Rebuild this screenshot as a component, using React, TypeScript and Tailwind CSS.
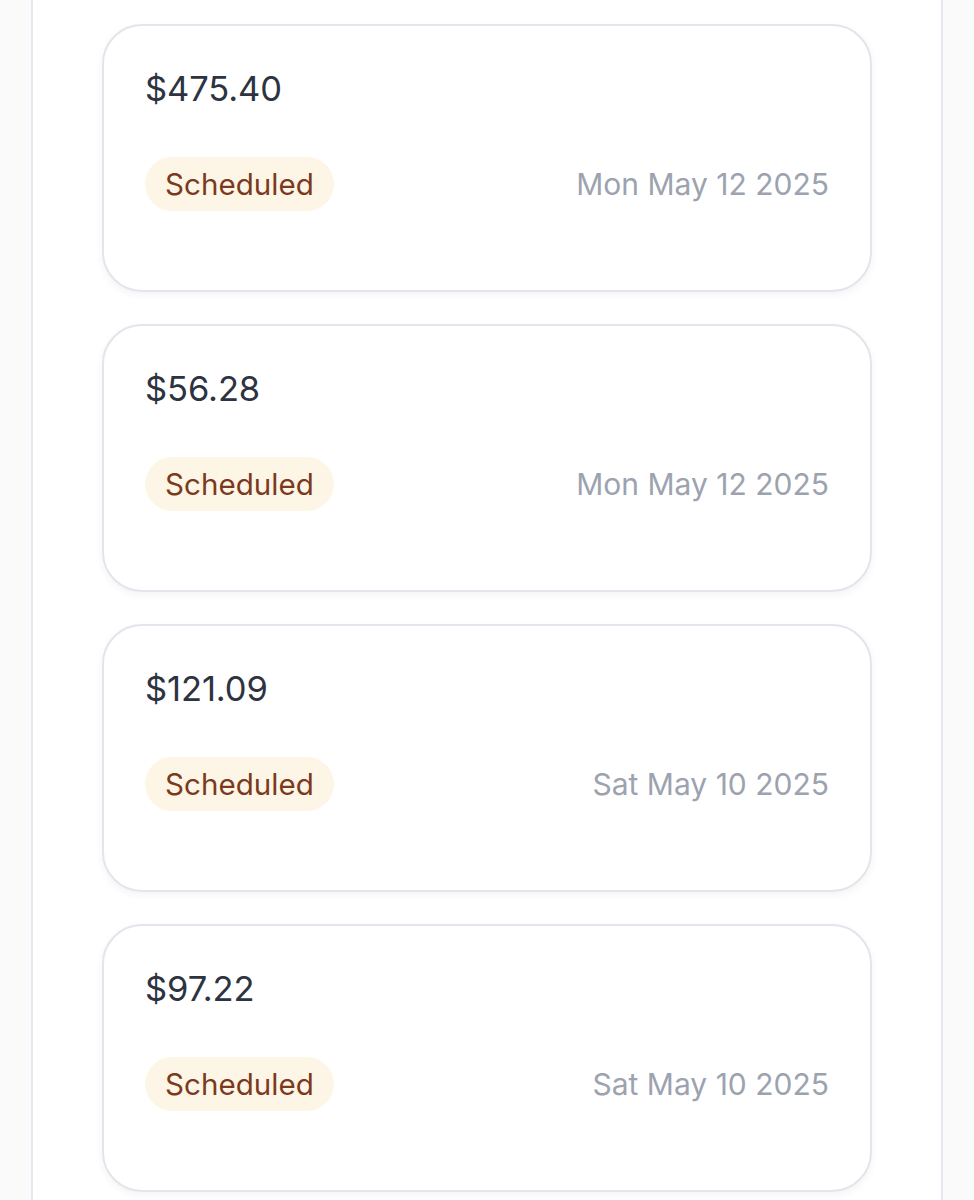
import React from "react";

const items = [
  { amount: "$475.40", date: "Mon May 12 2025" },
  { amount: "$56.28", date: "Mon May 12 2025" },
  { amount: "$121.09", date: "Sat May 10 2025" },
  { amount: "$97.22", date: "Sat May 10 2025" },
];

export default function App() {
  return (
    <div
      className="min-h-[1200px] bg-[#fafafa] flex justify-center"
      style={{ fontFamily: "Inter, 'Noto Sans', sans-serif" }}
    >
      <div className="w-[912px] min-h-[1200px] bg-white border-x-2 border-[#e6e7f0] flex flex-col items-center gap-[32px] pt-[24px] pb-[40px]">
        {items.map((it, i) => (
          <div
            key={i}
            className="w-[770px] h-[268px] rounded-[40px] border-2 border-[#e3e5ec] bg-white shadow-[0_3px_8px_rgba(0,0,0,0.05)] px-[41px] pt-[42px] flex flex-col"
          >
            <div className="text-[34.5px] leading-[41px] text-[#2d3340] tracking-[-0.1px]">
              {it.amount}
            </div>
            <div className="mt-[48px] flex items-center justify-between">
              <span className="h-[54px] px-[20px] rounded-full bg-[#fdf6e6] text-[#7b3a1e] text-[29.6px] flex items-center">
                Scheduled
              </span>
              <span className="text-[30px] text-[#9ca3af]">{it.date}</span>
            </div>
          </div>
        ))}
      </div>
    </div>
  );
}
